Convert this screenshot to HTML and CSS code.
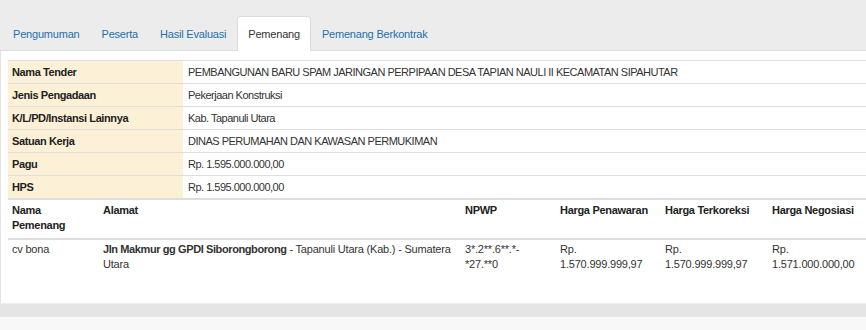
FILE: index.html
```html
<!DOCTYPE html>
<html lang="id">
<head>
    <meta charset="UTF-8">
    <meta name="viewport" content="width=device-width, initial-scale=1.0">
    <title>Pemenang Tender</title>
    <link rel="stylesheet" href="styles.css">
</head>
<body>
    <ul class="tabs">
        <li><a href="#">Pengumuman</a></li>
        <li><a href="#">Peserta</a></li>
        <li><a href="#">Hasil Evaluasi</a></li>
        <li class="active"><a href="#">Pemenang</a></li>
        <li><a href="#">Pemenang Berkontrak</a></li>
    </ul>

    <div class="panel">
        <table class="info">
            <tr>
                <th>Nama Tender</th>
                <td>PEMBANGUNAN BARU SPAM JARINGAN PERPIPAAN DESA TAPIAN NAULI II KECAMATAN SIPAHUTAR</td>
            </tr>
            <tr>
                <th>Jenis Pengadaan</th>
                <td>Pekerjaan Konstruksi</td>
            </tr>
            <tr>
                <th>K/L/PD/Instansi Lainnya</th>
                <td>Kab. Tapanuli Utara</td>
            </tr>
            <tr>
                <th>Satuan Kerja</th>
                <td>DINAS PERUMAHAN DAN KAWASAN PERMUKIMAN</td>
            </tr>
            <tr>
                <th>Pagu</th>
                <td>Rp. 1.595.000.000,00</td>
            </tr>
            <tr>
                <th>HPS</th>
                <td>Rp. 1.595.000.000,00</td>
            </tr>
        </table>

        <table class="winner">
            <colgroup>
                <col class="c-nama">
                <col class="c-alamat">
                <col class="c-npwp">
                <col class="c-harga">
                <col class="c-harga2">
                <col class="c-harga3">
            </colgroup>
            <thead>
                <tr>
                    <th>Nama Pemenang</th>
                    <th>Alamat</th>
                    <th>NPWP</th>
                    <th>Harga Penawaran</th>
                    <th>Harga Terkoreksi</th>
                    <th>Harga Negosiasi</th>
                </tr>
            </thead>
            <tbody>
                <tr>
                    <td>cv bona</td>
                    <td><b>Jln Makmur gg GPDI Siborongborong</b> - Tapanuli Utara (Kab.) - Sumatera Utara</td>
                    <td>3*.2**.6**.*-<br>*27.**0</td>
                    <td>Rp. 1.570.999.999,97</td>
                    <td>Rp. 1.570.999.999,97</td>
                    <td>Rp. 1.571.000.000,00</td>
                </tr>
            </tbody>
        </table>
    </div>

    <div class="bottom"></div>
</body>
</html>
```

FILE: styles.css
```css
body {
    font-family: "Liberation Sans", Arial, sans-serif;
    font-size: 11px;
    letter-spacing: -0.2px;
    color: #333;
    background-color: #f8f8f8;
    margin: 0;
    width: 900px;
}
b, th {
    letter-spacing: -0.4px;
}
.tabs {
    list-style: none;
    margin: 0;
    padding: 16px 0 0 2px;
    display: flex;
    background-color: #ececec;
    border-bottom: 1px solid #dcdcdc;
}
.tabs li {
    margin-bottom: -1px;
}
.tabs a {
    display: block;
    padding: 10px 10px;
    line-height: 14px;
    color: #2270b0;
    text-decoration: none;
    border: 1px solid transparent;
    border-bottom: none;
}
.tabs li.active a {
    color: #333;
    background-color: #fff;
    border-color: #dcdcdc;
    border-radius: 3px 3px 0 0;
}
.panel {
    background-color: #fff;
    border-left: 1px solid #e4e4e4;
    padding: 9px 0 26px 7px;
}
table {
    border-collapse: collapse;
}
.info {
    width: 100%;
}
.info th, .info td {
    text-align: left;
    padding: 4px 4px;
    line-height: 14px;
    border-top: 1px solid #dedede;
}
.info th {
    width: 167px;
    background-color: #fcf1d6;
    color: #222;
}
.info td {
    padding-left: 5px;
    letter-spacing: -0.5px;
}
.winner {
    table-layout: fixed;
    width: 866px;
    border-top: 2px solid #dedede;
}
.winner th, .winner td {
    text-align: left;
    vertical-align: top;
    line-height: 15px;
    padding: 3px 4px 5px 4px;
}
.winner th {
    color: #222;
    letter-spacing: -0.3px;
    border-bottom: 2px solid #dedede;
}
.winner td {
    padding-top: 2px;
}
.c-nama { width: 91px; }
.c-alamat { width: 362px; }
.c-npwp { width: 95px; }
.c-harga { width: 105px; }
.c-harga2 { width: 107px; }
.c-harga3 { width: 106px; }
.bottom {
    height: 13px;
    background-color: #e5e5e5;
    border-top: 1px solid #eeeeee;
}
```
